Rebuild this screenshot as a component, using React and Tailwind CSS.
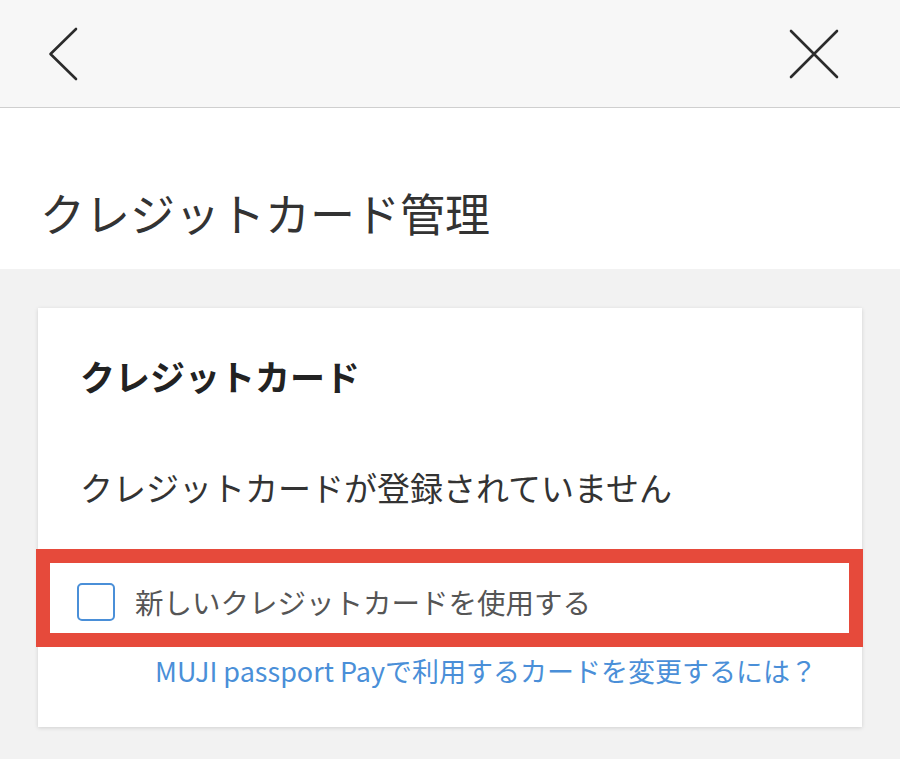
export default function App() {
  const font = { fontFamily: '"Noto Sans CJK JP", "Noto Sans", sans-serif' };

  return (
    <div className="min-h-screen bg-[#f2f2f2]" style={font}>
      {/* Header */}
      <header className="h-[108px] bg-[#f7f7f7] border-b border-[#cfcfcf] flex items-center justify-between pl-[48px] pr-[61px]">
        <svg width="30" height="54" viewBox="0 0 30 54" fill="none">
          <path d="M28 2 L2.5 27 L28 52" stroke="#2b2b2b" strokeWidth="2.6" strokeLinecap="round" strokeLinejoin="round" />
        </svg>
        <svg width="50" height="50" viewBox="0 0 50 50" fill="none">
          <path d="M2 2 L48 48 M48 2 L2 48" stroke="#2b2b2b" strokeWidth="2.6" strokeLinecap="round" />
        </svg>
      </header>

      {/* Title */}
      <div className="h-[161px] bg-white flex items-center pt-[48px] pl-[40px]">
        <h1 className="text-[45px] leading-none text-[#333333] font-normal">クレジットカード管理</h1>
      </div>

      {/* Content */}
      <div className="pt-[39px] px-[38px] pb-[32px]">
        <div className="bg-white shadow-[0_1px_4px_rgba(0,0,0,0.14)] pb-[34px]">
          <div className="h-[134px] flex items-center pl-[42px]">
            <h2 className="text-[35px] leading-none font-bold text-[#222222]">クレジットカード</h2>
          </div>
          <div className="h-[90px] flex items-center pl-[42px]">
            <p className="text-[33px] leading-none text-[#333333]">クレジットカードが登録されていません</p>
          </div>

          {/* Highlighted checkbox row */}
          <div className="mt-[17px] -ml-[2px] -mr-[1px] h-[98px] border-[14px] border-[#e64a3b] flex items-center pt-[8px] pl-[27px]">
            <label className="flex items-center gap-[20px]">
              <span className="w-[38px] h-[38px] rounded-[5px] border-2 border-[#4a8fd8] bg-white" />
              <span className="text-[28.5px] leading-none text-[#555555]">新しいクレジットカードを使用する</span>
            </label>
          </div>

          <div className="h-[46px] flex items-center justify-end pr-[45px]">
            <a className="text-[27px] leading-none text-[#4a8fd8]">MUJI passport Payで利用するカードを変更するには？</a>
          </div>
        </div>
      </div>
    </div>
  );
}
